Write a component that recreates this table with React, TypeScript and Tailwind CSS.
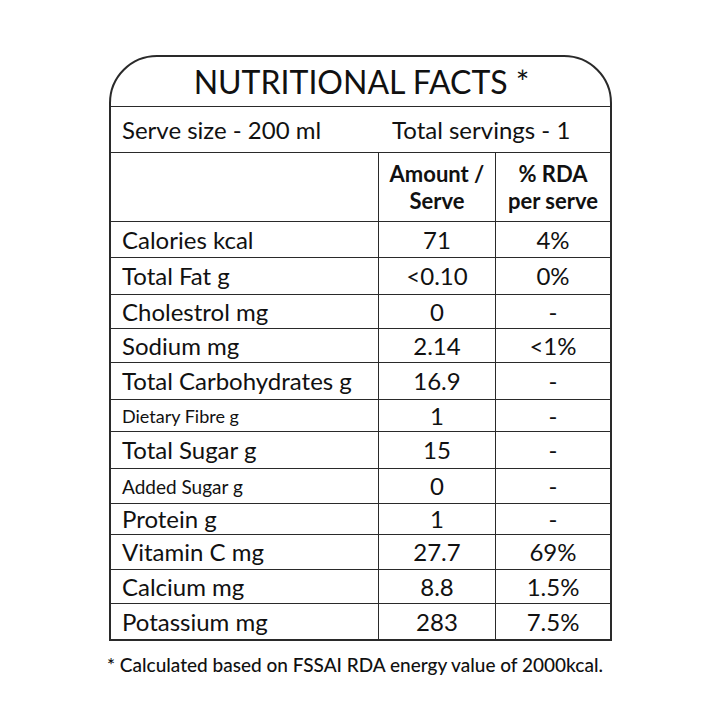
import React from "react";

type Row = { label: string; amount: string; rda: string; h: string; small?: "xs" | "sm" };

const rows: Row[] = [
  { label: "Calories kcal", amount: "71", rda: "4%", h: "h-[36px]" },
  { label: "Total Fat g", amount: "<0.10", rda: "0%", h: "h-[37px]" },
  { label: "Cholestrol mg", amount: "0", rda: "-", h: "h-[34px]" },
  { label: "Sodium mg", amount: "2.14", rda: "<1%", h: "h-[34px]" },
  { label: "Total Carbohydrates g", amount: "16.9", rda: "-", h: "h-[37px]" },
  { label: "Dietary Fibre g", amount: "1", rda: "-", h: "h-[32px]", small: "xs" },
  { label: "Total Sugar g", amount: "15", rda: "-", h: "h-[37px]" },
  { label: "Added Sugar g", amount: "0", rda: "-", h: "h-[35px]", small: "sm" },
  { label: "Protein g", amount: "1", rda: "-", h: "h-[31px]" },
  { label: "Vitamin C mg", amount: "27.7", rda: "69%", h: "h-[35px]" },
  { label: "Calcium mg", amount: "8.8", rda: "1.5%", h: "h-[34px]" },
  { label: "Potassium mg", amount: "283", rda: "7.5%", h: "h-[35px]" },
];

export default function App() {
  return (
    <div
      className="w-[720px] h-[720px] bg-white text-[#111] pt-[55px] pl-[109px]"
      style={{ fontFamily: "Lato, 'Noto Sans', sans-serif" }}
    >
      <div className="w-[503px] border-2 border-[#2a2a2a] rounded-t-[48px] overflow-hidden">
        <div className="h-[50px] border-b border-[#2a2a2a] flex items-center justify-center text-[32px] leading-none pl-[2px]">
          NUTRITIONAL FACTS *
        </div>
        <div className="h-[46px] border-b border-[#2a2a2a] flex items-center text-[24px] leading-none">
          <div className="w-[268px] pl-[11px]">Serve size - 200 ml</div>
          <div className="pl-[13px]">Total servings - 1</div>
        </div>
        <div className="h-[69px] border-b border-[#2a2a2a] flex font-bold text-[22px] leading-[27px]">
          <div className="w-[268px] border-r border-[#2a2a2a]" />
          <div className="w-[117px] border-r border-[#2a2a2a] flex flex-col items-center justify-center">
            <span>Amount /</span>
            <span>Serve</span>
          </div>
          <div className="flex-1 flex flex-col items-center justify-center">
            <span>% RDA</span>
            <span>per serve</span>
          </div>
        </div>
        {rows.map((r, i) => (
          <div
            key={r.label}
            className={`${r.h} flex text-[24px] leading-none ${i < rows.length - 1 ? "border-b border-[#2a2a2a]" : ""}`}
          >
            <div
              className={`w-[268px] border-r border-[#2a2a2a] flex items-center pl-[11px] ${
                r.small === "xs" ? "text-[18px]" : r.small === "sm" ? "text-[19px]" : ""
              }`}
            >
              {r.label}
            </div>
            <div className="w-[117px] border-r border-[#2a2a2a] flex items-center justify-center">
              {r.amount}
            </div>
            <div className="flex-1 flex items-center justify-center">{r.rda}</div>
          </div>
        ))}
      </div>
      <div className="mt-[14px] -ml-[2px] text-[19px] font-medium leading-none">
        * Calculated based on FSSAI RDA energy value of 2000kcal.
      </div>
    </div>
  );
}
